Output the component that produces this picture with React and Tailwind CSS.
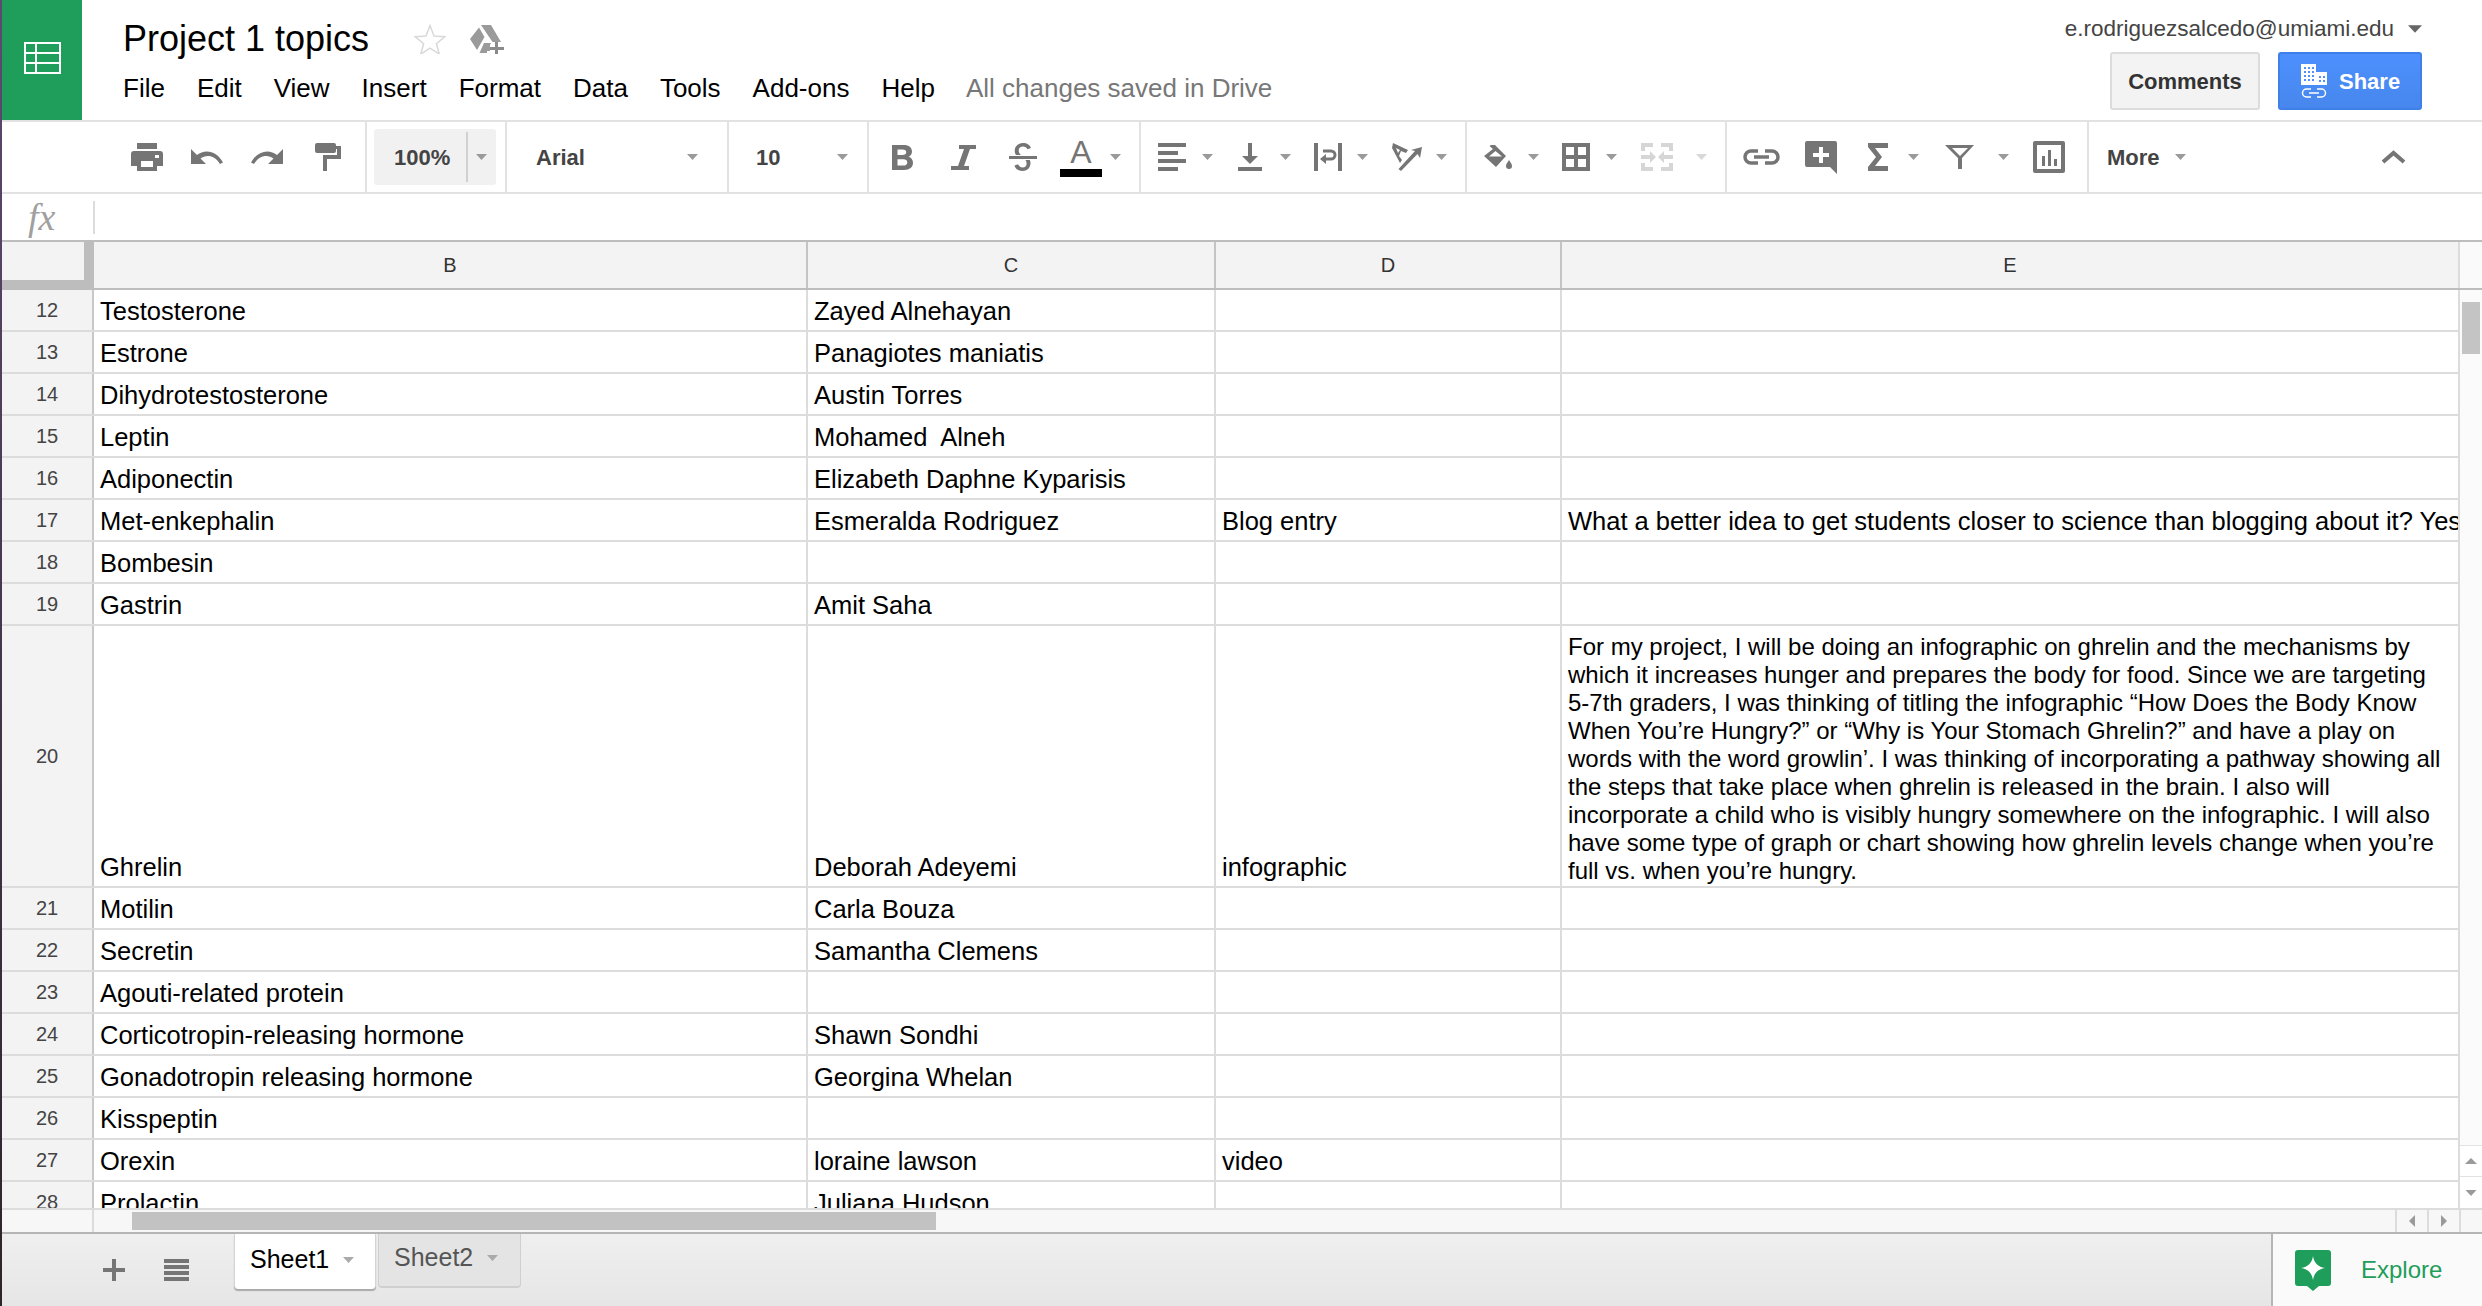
const rows = [
  { n: 12, b: 'Testosterone', c: 'Zayed Alnehayan' },
  { n: 13, b: 'Estrone', c: 'Panagiotes maniatis' },
  { n: 14, b: 'Dihydrotestosterone', c: 'Austin Torres' },
  { n: 15, b: 'Leptin', c: 'Mohamed  Alneh' },
  { n: 16, b: 'Adiponectin', c: 'Elizabeth Daphne Kyparisis' },
  { n: 17, b: 'Met-enkephalin', c: 'Esmeralda Rodriguez', d: 'Blog entry', e: 'What a better idea to get students closer to science than blogging about it? Yes' },
  { n: 18, b: 'Bombesin' },
  { n: 19, b: 'Gastrin', c: 'Amit Saha' },
  { n: 20, b: 'Ghrelin', c: 'Deborah Adeyemi', d: 'infographic', tall: true },
  { n: 21, b: 'Motilin', c: 'Carla Bouza' },
  { n: 22, b: 'Secretin', c: 'Samantha Clemens' },
  { n: 23, b: 'Agouti-related protein' },
  { n: 24, b: 'Corticotropin-releasing hormone', c: 'Shawn Sondhi' },
  { n: 25, b: 'Gonadotropin releasing hormone', c: 'Georgina Whelan' },
  { n: 26, b: 'Kisspeptin' },
  { n: 27, b: 'Orexin', c: 'loraine lawson', d: 'video' },
  { n: 28, b: 'Prolactin', c: 'Juliana Hudson' },
]

const ghrelinText = 'For my project, I will be doing an infographic on ghrelin and the mechanisms by which it increases hunger and prepares the body for food. Since we are targeting 5-7th graders, I was thinking of titling the infographic “How Does the Body Know When You’re Hungry?” or “Why is Your Stomach Ghrelin?” and have a play on words with the word growlin’. I was thinking of incorporating a pathway showing all the steps that take place when ghrelin is released in the brain. I also will incorporate a child who is visibly hungry somewhere on the infographic. I will also have some type of graph or chart showing how ghrelin levels change when you’re full vs. when you’re hungry.'

const menu = ['File', 'Edit', 'View', 'Insert', 'Format', 'Data', 'Tools', 'Add-ons', 'Help']

function Caret({ className = '', color = '#9a9a9a' }) {
  return (
    <svg viewBox="0 0 11 6" className={`w-[11px] h-[6px] shrink-0 ${className}`}>
      <path d="M0 0h11L5.5 6z" fill={color} />
    </svg>
  )
}

function Group({ className, children }) {
  return <div className={`h-full shrink-0 flex items-center border-r-2 border-[#e2e2e2] ${className}`}>{children}</div>
}

function Cell({ className, children }) {
  return (
    <div className={`shrink-0 flex items-end overflow-hidden whitespace-pre px-[6px] pb-[3px] leading-[32px] border-r-2 border-[#dcdcdc] text-[25.5px] text-black ${className}`}>
      {children}
    </div>
  )
}

export default function App() {
  return (
    <div className="w-[2482px] h-[1306px] flex overflow-hidden bg-white font-['Liberation_Sans',Arial,sans-serif]">
      <div className="w-[2px] h-full shrink-0 bg-gradient-to-b from-[#5d4a72] to-[#2e2429]" />
      <div className="w-[2480px] h-full flex flex-col">
        {/* title bar */}
        <div className="h-[122px] shrink-0 flex border-b-2 border-[#e2e2e2]">
          <div className="w-[80px] h-[120px] shrink-0 bg-[#1f9d5a] flex items-center justify-center pb-[4px]">
            <svg viewBox="0 0 37 32" className="w-[37px] h-[32px]">
              <path d="M1 1h35v30H1zM1 11h35M1 21h35M12 1v30" fill="none" stroke="#fff" strokeWidth="2" />
            </svg>
          </div>
          <div className="ml-[41px] flex flex-col">
            <div className="flex items-center h-[36px] mt-[21px]">
              <span className="text-[36px] leading-[36px] text-black">Project 1 topics</span>
              <svg viewBox="0 0 32 30" className="w-[32px] h-[30px] ml-[45px]">
                <path d="M16 1.5l4 10.5 11 .7-8.600 7 2.900 10.500-9.300-6-9.300 6 2.900-10.500-8.600-7 11-.7z" fill="none" stroke="#d9d9d9" strokeWidth="1.500" />
              </svg>
              <svg viewBox="0 0 34 29" className="w-[34px] h-[29px] ml-[24px]">
                <path d="M11 0h10l10 17H22.500zM9 2.500l5.500 9.500L7 25 0 14zM14 18h7l-1 2v6h-3v2H9.500z" fill="#9a9a9a" />
                <path d="M25 17h3v5h6v3h-6v4h-3v-4h-5v-3h5z" fill="#8a8a8a" />
              </svg>
            </div>
            <div className="flex items-center h-[32px] mt-[15px] gap-[32px] text-[26px] leading-[32px] text-black">
              {menu.map(m => <span key={m}>{m}</span>)}
              <span className="ml-[-1px] text-[#777]">All changes saved in Drive</span>
            </div>
          </div>
          <div className="ml-auto mr-[60px] flex flex-col items-end">
            <div className="flex items-center h-[24px] mt-[17px] text-[22.500px] leading-[24px] text-[#444]">
              e.rodriguezsalcedo@umiami.edu
              <Caret className="ml-[14px] !w-[14px] !h-[8px]" color="#666" />
            </div>
            <div className="flex mt-[11px] gap-[18px]">
              <div className="w-[150px] h-[58px] flex items-center justify-center rounded-[3px] border-2 border-[#dcdcdc] bg-[#f3f3f3] text-[22px] font-bold text-[#333]">Comments</div>
              <div className="w-[144px] h-[58px] flex items-center pl-[21px] rounded-[3px] border-2 border-[#3f80e8] bg-gradient-to-b from-[#4d90fe] to-[#4787ed] text-[22px] font-bold text-white">
                <svg viewBox="0 0 26 34" className="w-[26px] h-[34px] shrink-0">
                  <path d="M0 0h15v8h11v13H0z" fill="#fff" />
                  <path d="M3 3h2v2H3zM7 3h2v2H7zM11 3h2v2h-2zM3 7h2v2H3zM7 7h2v2H7zM11 7h2v2h-2zM3 11h2v2H3zM7 11h2v2H7zM11 11h2v2h-2zM3 15h2v2H3zM7 15h2v2H7zM11 15h2v2h-2zM18 12h2v2h-2zM22 12h2v2h-2zM18 16h2v2h-2zM22 16h2v2h-2z" fill="#4d90fe" />
                  <path d="M10 25H5.500a3.800 3.800 0 0 0 0 8H10M16 25h4.500a3.800 3.800 0 0 1 0 8H16M8 29h10" fill="none" stroke="#fff" strokeWidth="1.500" />
                </svg>
                <span className="ml-[12px]">Share</span>
              </div>
            </div>
          </div>
        </div>

        {/* toolbar */}
        <div className="h-[72px] shrink-0 flex border-b-2 border-[#e2e2e2]">
          <Group className="w-[365px]">
            <svg viewBox="0 0 32 28" className="w-[32px] h-[28px] ml-[129px] shrink-0">
              <path d="M6 0h20v6H6zM3 8h26a3 3 0 0 1 3 3v12h-6v5H6v-5H0V11a3 3 0 0 1 3-3z" fill="#757575" />
              <path d="M10 18h12v6H10zM24 12h4v3h-4z" fill="#fff" />
            </svg>
            <svg viewBox="0 0 32 16" className="w-[32px] h-[16px] ml-[28px] shrink-0">
              <path d="M0 0v15h15l-5.500-5.500C15 5 24 6 29 15l3-1.500C26 2 14-.5 6 6z" fill="#757575" />
            </svg>
            <svg viewBox="0 0 32 16" className="w-[32px] h-[16px] ml-[28px] shrink-0">
              <path d="M32 0v15H17l5.500-5.500C17 5 8 6 3 15l-3-1.500C6 2 18-.5 26 6z" fill="#757575" />
            </svg>
            <svg viewBox="0 0 26 28" className="w-[26px] h-[28px] ml-[32px] shrink-0">
              <path d="M2 0h17a2 2 0 0 1 2 2v6a2 2 0 0 1-2 2H2a2 2 0 0 1-2-2V2a2 2 0 0 1 2-2zM21 3h5v13H12v12H8V12h14V6h-1z" fill="#757575" />
            </svg>
          </Group>
          <Group className="w-[140px] pl-[7px]">
            <div className="w-[122px] h-[56px] flex items-center rounded-[3px] bg-[#f1f1f1]">
              <span className="w-[92px] pl-[20px] text-[22px] font-bold text-[#444]">100%</span>
              <div className="w-[2px] h-[50px] bg-[#d0d0d0]" />
              <Caret className="ml-[8px]" />
            </div>
          </Group>
          <Group className="w-[222px]">
            <span className="ml-[29px] w-[151px] text-[22px] font-bold text-[#444]">Arial</span>
            <Caret />
          </Group>
          <Group className="w-[140px]">
            <span className="ml-[27px] w-[81px] text-[22px] font-bold text-[#444]">10</span>
            <Caret />
          </Group>
          <Group className="w-[272px]">
            <svg viewBox="0 0 21 25" className="w-[21px] h-[25px] ml-[23px] shrink-0">
              <path d="M0 0h11.500C17 0 20 2.700 20 6.500c0 2.500-1.300 4.400-3.500 5.300 2.800.8 4.500 3 4.500 6 0 4.300-3.300 7.200-9 7.200H0zM5.500 4.500V10h5c2.300 0 3.700-1 3.700-2.800S13 4.500 10.500 4.500zm0 9.800v6.200h5.800c2.500 0 4-1.200 4-3.100s-1.500-3.100-4-3.100z" fill="#757575" fillRule="evenodd" />
            </svg>
            <svg viewBox="0 0 25 25" className="w-[25px] h-[25px] ml-[38px] shrink-0">
              <path d="M8 0h17v4h-6l-6 17h5v4H0v-4h7l6-17H8z" fill="#757575" />
            </svg>
            <svg viewBox="0 0 28 28" className="w-[28px] h-[28px] ml-[33px] shrink-0">
              <path d="M0 13h28v3H0zM7 12c-1-1.500-1.300-3-1.300-4.500C5.700 3 9.500 0 14 0c4 0 7 2 8 5l-3.600 1.300C17.700 4.500 16 3.500 14 3.500c-2.500 0-4.300 1.500-4.300 3.700 0 1.900.8 3.600 2.300 4.800zM16.500 17h4.300c.5 1 .7 2 .7 3 0 5-3.500 8-8 8-4 0-7-2-8-5.500l3.600-1.200c.7 2 2.400 3.200 4.500 3.200 2.500 0 4-1.500 4-4 0-1.300-.4-2.500-1.100-3.500z" fill="#757575" />
            </svg>
            <div className="w-[42px] ml-[23px] flex flex-col items-center shrink-0">
              <span className="text-[32px] leading-[28px] text-[#757575]">A</span>
              <div className="w-[42px] h-[8px] mt-[3px] bg-black" />
            </div>
            <Caret className="ml-[8px]" />
          </Group>
          <Group className="w-[326px]">
            <svg viewBox="0 0 28 28" className="w-[28px] h-[28px] ml-[17px] shrink-0">
              <path d="M0 0h28v4H0zM0 8h20v4H0zM0 16h28v4H0zM0 24h20v4H0z" fill="#757575" />
            </svg>
            <Caret className="ml-[16px]" />
            <svg viewBox="0 0 24 28" className="w-[24px] h-[28px] ml-[25px] shrink-0">
              <path d="M10 0h4v13h6l-8 8-8-8h6zM0 24h24v4H0z" fill="#757575" />
            </svg>
            <Caret className="ml-[18px]" />
            <svg viewBox="0 0 28 28" className="w-[28px] h-[28px] ml-[23px] shrink-0">
              <path d="M0 0h4v28H0zM24 0h4v28h-4z" fill="#757575" />
              <path d="M9 8h8a4 4 0 0 1 0 8h-6" fill="none" stroke="#757575" strokeWidth="3" />
              <path d="M12 11v10l-6-5z" fill="#757575" />
            </svg>
            <Caret className="ml-[15px]" />
            <svg viewBox="0 0 31 28" className="w-[31px] h-[28px] ml-[23px] shrink-0">
              <path d="M2 0l15 7-2 3-5-2-2 5 3 4-2 3L1 5zM5 5l2 5 2-3z" fill="#757575" fillRule="evenodd" />
              <path d="M10 28l-2.500-2L24 8l-4-1 11-3-2 11-2.500-4z" fill="#757575" />
            </svg>
            <Caret className="ml-[14px]" />
          </Group>
          <Group className="w-[260px]">
            <svg viewBox="0 0 28 25" className="w-[28px] h-[25px] ml-[17px] shrink-0">
              <path d="M7 0l2-2 13 13-10 11L0 11 9 4 5.500 1zM11.500 6L5 11.500h13z" fill="#757575" fillRule="evenodd" />
              <path d="M25 15c1.500 2.500 3 4 3 6a3 3 0 0 1-6 0c0-2 1.500-3.500 3-6z" fill="#757575" />
            </svg>
            <Caret className="ml-[16px]" />
            <svg viewBox="0 0 28 28" className="w-[28px] h-[28px] ml-[23px] shrink-0">
              <path d="M0 0h28v28H0zM4 4v8h8V4zM16 4v8h8V4zM4 16v8h8v-8zM16 16v8h8v-8z" fill="#757575" fillRule="evenodd" />
            </svg>
            <Caret className="ml-[16px]" />
            <svg viewBox="0 0 32 28" className="w-[32px] h-[28px] ml-[24px] shrink-0">
              <path d="M0 0h12v4H4v4H0zM20 0h12v8h-4V4h-8zM0 20h4v4h8v4H0zM28 20h4v8H20v-4h8zM0 12h9V8l6 6-6 6v-4H0zM32 12h-9V8l-6 6 6 6v-4h9z" fill="#d6d6d6" />
            </svg>
            <Caret className="ml-[23px]" color="#d8d8d8" />
          </Group>
          <Group className="w-[362px]">
            <svg viewBox="0 0 37 16" className="w-[37px] h-[16px] ml-[16px] shrink-0">
              <path d="M15 2H8a6 6 0 0 0 0 12h7M22 2h7a6 6 0 0 1 0 12h-7M11 8h15" fill="none" stroke="#757575" strokeWidth="3.500" />
            </svg>
            <svg viewBox="0 0 32 33" className="w-[32px] h-[33px] ml-[25px] shrink-0">
              <path d="M2 0h28a2 2 0 0 1 2 2v31l-7-7H2a2 2 0 0 1-2-2V2a2 2 0 0 1 2-2z" fill="#757575" />
              <path d="M14 6h4v6h6v4h-6v6h-4v-6H8v-4h6z" fill="#fff" />
            </svg>
            <svg viewBox="0 0 21 28" className="w-[21px] h-[28px] ml-[31px] shrink-0">
              <path d="M0 0h20v5H7l7 9-7 9h13v5H0v-4l8-10L0 4z" fill="#757575" />
            </svg>
            <Caret className="ml-[19px]" />
            <svg viewBox="0 0 29 24" className="w-[29px] h-[24px] ml-[26px] shrink-0">
              <path d="M0 0h29L17 13v11h-4V13zM7 3l8 8 8-8z" fill="#757575" fillRule="evenodd" />
            </svg>
            <Caret className="ml-[24px]" />
            <svg viewBox="0 0 32 32" className="w-[32px] h-[32px] ml-[24px] shrink-0">
              <path d="M2 0h28a2 2 0 0 1 2 2v28a2 2 0 0 1-2 2H2a2 2 0 0 1-2-2V2a2 2 0 0 1 2-2zM4 4v24h24V4z" fill="#757575" fillRule="evenodd" />
              <path d="M9 15h3v10H9zM15 9h3v16h-3zM21 18h3v7h-3z" fill="#757575" />
            </svg>
          </Group>
          <div className="flex-1 flex items-center">
            <span className="ml-[18px] w-[68px] text-[22px] font-bold text-[#444]">More</span>
            <Caret />
            <svg viewBox="0 0 25 14" className="w-[25px] h-[14px] ml-auto mr-[76px]">
              <path d="M2 12L12.500 3 23 12" fill="none" stroke="#757575" strokeWidth="4" />
            </svg>
          </div>
        </div>

        {/* formula bar */}
        <div className="h-[48px] shrink-0 flex items-center border-b-2 border-[#bdbdbd]">
          <span className="w-[91px] pl-[26px] font-['Liberation_Serif',serif] italic text-[38px] leading-[40px] text-[#a0a0a0]">fx</span>
          <div className="w-[2px] h-[33px] bg-[#dcdcdc]" />
        </div>

        {/* column headers */}
        <div className="h-[48px] shrink-0 flex bg-[#f3f3f3] border-b-2 border-[#bdbdbd] text-[20px] text-[#333]">
          <div className="w-[92px] h-[46px] shrink-0 border-r-[10px] border-b-[8px] border-[#bdbdbd]" />
          <div className="w-[714px] shrink-0 flex items-center justify-center border-r-2 border-[#c4c4c4]">B</div>
          <div className="w-[408px] shrink-0 flex items-center justify-center border-r-2 border-[#c4c4c4]">C</div>
          <div className="w-[346px] shrink-0 flex items-center justify-center border-r-2 border-[#c4c4c4]">D</div>
          <div className="w-[898px] shrink-0 flex items-center justify-center border-r-2 border-[#dcdcdc]">E</div>
          <div className="flex-1 bg-[#fafafa]" />
        </div>

        {/* grid */}
        <div className="flex-1 min-h-0 flex">
          <div className="w-[2458px] shrink-0 overflow-hidden">
            {rows.map(r => (
              <div key={r.n} className={`flex border-b-2 border-[#dcdcdc] ${r.tall ? 'h-[262px]' : 'h-[42px]'}`}>
                <div className="w-[92px] shrink-0 flex items-center justify-center bg-[#f3f3f3] border-r-2 border-[#c8c8c8] text-[20px] text-[#444]">{r.n}</div>
                <Cell className="w-[714px]">{r.b}</Cell>
                <Cell className="w-[408px]">{r.c}</Cell>
                <Cell className="w-[346px]">{r.d}</Cell>
                {r.tall ? (
                  <div className="w-[898px] shrink-0 flex items-end px-[6px] pb-[1px] border-r-2 border-[#dcdcdc] text-[24px] leading-[28px] text-black">
                    <div>{ghrelinText}</div>
                  </div>
                ) : (
                  <Cell className="w-[898px]">{r.e}</Cell>
                )}
              </div>
            ))}
          </div>
          <div className="flex-1 flex flex-col bg-[#fbfbfb]">
            <div className="h-[52px] mt-[12px] mx-[2px] bg-[#c4c4c4]" />
            <div className="mt-auto h-[32px] flex items-center justify-center border-y border-[#e2e2e2] bg-white">
              <svg viewBox="0 0 12 6" className="w-[12px] h-[6px]"><path d="M0 6h12L6 0z" fill="#9a9a9a" /></svg>
            </div>
            <div className="h-[31px] flex items-center justify-center bg-white">
              <Caret className="!w-[12px]" />
            </div>
          </div>
        </div>

        {/* horizontal scroll */}
        <div className="h-[24px] shrink-0 flex items-center bg-[#f7f7f7] border-t-2 border-[#dcdcdc]">
          <div className="w-[92px] h-full shrink-0 border-r-2 border-[#dcdcdc]" />
          <div className="w-[804px] h-[18px] ml-[38px] bg-[#c2c2c2]" />
          <div className="w-[32px] h-full ml-auto flex items-center justify-center border-l-2 border-[#dcdcdc]">
            <svg viewBox="0 0 6 12" className="w-[6px] h-[12px]"><path d="M6 0v12L0 6z" fill="#9a9a9a" /></svg>
          </div>
          <div className="w-[32px] h-full flex items-center justify-center border-l-2 border-[#dcdcdc]">
            <svg viewBox="0 0 6 12" className="w-[6px] h-[12px]"><path d="M0 0v12l6-6z" fill="#9a9a9a" /></svg>
          </div>
          <div className="w-[23px] h-full border-l-2 border-[#dcdcdc]" />
        </div>

        {/* sheet tabs */}
        <div className="h-[74px] shrink-0 flex border-t-2 border-[#b5b5b5] bg-gradient-to-b from-[#efefef] to-[#e6e6e6]">
          <svg viewBox="0 0 22 22" className="w-[22px] h-[22px] ml-[101px] mt-[25px] shrink-0">
            <path d="M9 0h4v9h9v4h-9v9H9v-9H0V9h9z" fill="#757575" />
          </svg>
          <svg viewBox="0 0 25 22" className="w-[25px] h-[22px] ml-[39px] mt-[25px] shrink-0">
            <path d="M0 0h25v4H0zM0 6h25v4H0zM0 12h25v4H0zM0 18h25v4H0z" fill="#757575" />
          </svg>
          <div className="w-[142px] h-[55px] ml-[45px] shrink-0 flex items-center pl-[15px] pb-[4px] rounded-b-[4px] bg-white border-x border-[#d4d4d4] shadow-[0_2px_1px_#aaa] text-[25px] text-black">
            Sheet1
            <Caret className="ml-[14px]" color="#aaa" />
          </div>
          <div className="w-[143px] h-[54px] ml-[2px] shrink-0 flex items-center pl-[15px] pb-[4px] rounded-b-[4px] bg-[#e4e4e4] border-x border-b-2 border-[#cfcfcf] text-[25px] text-[#555]">
            Sheet2
            <Caret className="ml-[14px]" color="#aaa" />
          </div>
          <div className="w-[211px] h-full ml-auto flex items-center border-l-2 border-[#b5b5b5] bg-[#fafafa]">
            <svg viewBox="0 0 36 41" className="w-[36px] h-[41px] ml-[22px] shrink-0">
              <path d="M3 0h30a3 3 0 0 1 3 3v30a3 3 0 0 1-3 3h-9l-6 5-6-5H3a3 3 0 0 1-3-3V3a3 3 0 0 1 3-3z" fill="#1f9d5a" />
              <path d="M18 6c1 7 5 11 12 12-7 1-11 5-12 12-1-7-5-11-12-12 7-1 11-5 12-12z" fill="#fff" />
            </svg>
            <span className="ml-[30px] text-[24px] text-[#1f9d5a]">Explore</span>
          </div>
        </div>
      </div>
    </div>
  )
}
